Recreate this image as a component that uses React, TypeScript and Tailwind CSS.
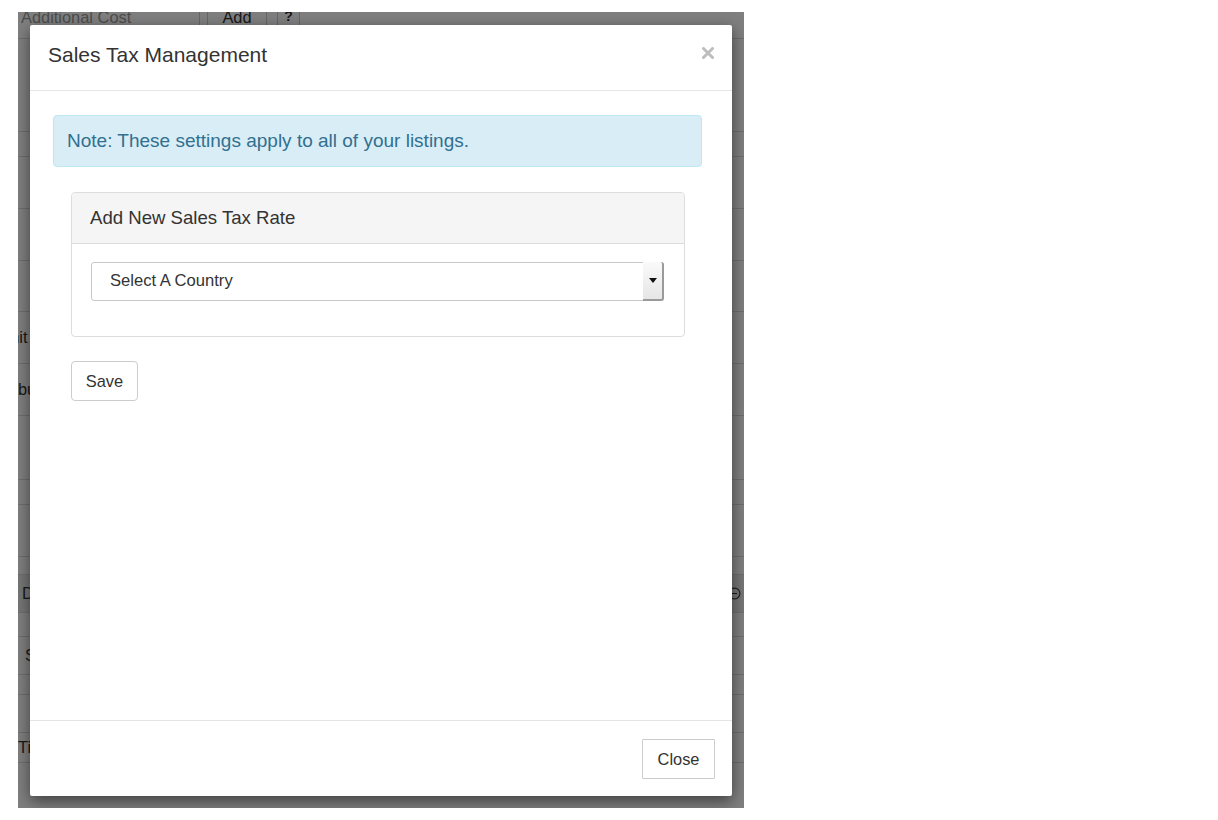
import { CircleMinus } from "lucide-react";

type Row = {
  h: string;
  left?: string;
  leftClass?: string;
  shade?: boolean;
  icon?: boolean;
};

// page rows behind the dialog, only the edges show
const rows: Row[] = [
  { h: "h-[93px]" },
  { h: "h-[25px]" },
  { h: "h-[52px]" },
  { h: "h-[52px]" },
  { h: "h-[51px]" },
  { h: "h-[52px]", left: "Limit", leftClass: "w-[9.5px] justify-end" },
  { h: "h-[52px]", left: "buyer", leftClass: "pl-[0px]" },
  { h: "h-[64px]" },
  { h: "h-[25px]" },
  { h: "h-[52px]" },
  { h: "h-[18px]" },
  { h: "h-[38px]", left: "Date", leftClass: "pl-[4px]", shade: true, icon: true },
  { h: "h-[24px]" },
  { h: "h-[38px]", left: "Shipping", leftClass: "pl-[7px]" },
  { h: "h-[20px]" },
  { h: "h-[38px]" },
  { h: "h-[30px]", left: "Time", leftClass: "pl-[0px]" },
];

const PageBehind = () => {
  return (
    <div className="flex flex-col bg-white text-[#333] text-[16.4px]">
      <div className="flex h-[27px] border-b border-[#ddd]">
        <div className="w-[182px] border-r border-[#ccc] pl-[3px]">
          <span className="block leading-none mt-[-3px] text-[#999]">
            Additional Cost
          </span>
        </div>
        <div className="ml-[7px] w-[60px] border-x border-[#ccc] flex justify-center">
          <span className="block leading-none mt-[-3px]">Add</span>
        </div>
        <div className="ml-[10px] w-[23px] border-x border-[#ccc] flex justify-center">
          <span className="block leading-none mt-[-3px] font-bold text-[14px]">
            ?
          </span>
        </div>
      </div>
      {rows.map((row, i) => (
        <div
          key={i}
          className={`${row.h} flex items-center justify-between border-b border-[#ddd] ${
            row.shade ? "bg-[#ececec]" : ""
          }`}
        >
          <div className={`flex whitespace-nowrap ${row.leftClass ?? ""}`}>
            {row.left && <span>{row.left}</span>}
          </div>
          {row.icon && (
            <CircleMinus className="size-[13px] mr-[3px] text-[#333]" strokeWidth={2} />
          )}
        </div>
      ))}
    </div>
  );
};

const SalesTaxModal = () => {
  return (
    <div className="absolute left-[12px] top-[13px] w-[702px] h-[771px] bg-white rounded-[2px] shadow-[0_5px_15px_rgba(0,0,0,0.5)] flex flex-col text-[#333]">
      <div className="h-[66px] shrink-0 border-b border-[#e5e5e5] flex items-center justify-between pl-[18px] pr-[18px]">
        <h4 className="text-[21px] font-normal mb-[5px]">Sales Tax Management</h4>
        <svg
          width="12"
          height="12"
          viewBox="0 0 12 12"
          className="mb-[10px]"
          aria-label="Close"
        >
          <path
            d="M1.5 1.5 L10.5 10.5 M10.5 1.5 L1.5 10.5"
            stroke="#bdbdbd"
            strokeWidth="3"
            strokeLinecap="round"
          />
        </svg>
      </div>

      <div className="flex-1 pt-[24px] pl-[23px] pr-[30px]">
        <div className="h-[52px] border border-[#bce8f1] bg-[#d9edf7] rounded-[4px] flex items-center pl-[13px] text-[#31708f] text-[19px]">
          Note: These settings apply to all of your listings.
        </div>

        <div className="pl-[18px] pr-[17px]">
          <div className="mt-[25px] border border-[#ddd] rounded-[4px] overflow-hidden">
            <div className="h-[51px] bg-[#f5f5f5] border-b border-[#ddd] flex items-center pl-[18px] text-[18.6px]">
              Add New Sales Tax Rate
            </div>
            <div className="pt-[18px] pb-[35px] pl-[19px] pr-[20px]">
              <div className="h-[39px] border border-[#c8c8c8] rounded-[3px] flex items-stretch justify-between bg-white">
                <span className="flex items-center pl-[18px] text-[16.6px]">
                  Select A Country
                </span>
                <span className="w-[21px] -my-px -mr-px bg-gradient-to-b from-[#fafafa] to-[#e6e6e6] border-r-2 border-b-2 border-[#9a9a9a] rounded-r-[3px] flex items-center justify-center">
                  <svg width="8" height="5" viewBox="0 0 8 5">
                    <path d="M0 0 H8 L4 5 Z" fill="#111" />
                  </svg>
                </span>
              </div>
            </div>
          </div>

          <button className="mt-[24px] w-[67px] h-[40px] border border-[#ccc] rounded-[4px] bg-white text-[16.4px] text-[#333]">
            Save
          </button>
        </div>
      </div>

      <div className="h-[76px] shrink-0 border-t border-[#e5e5e5] flex justify-end items-start pt-[18px] pr-[17px]">
        <button className="w-[73px] h-[40px] border border-[#ccc] rounded-[1px] bg-white text-[16.4px] text-[#333]">
          Close
        </button>
      </div>
    </div>
  );
};

export default function App() {
  return (
    <div
      className="w-[1218px] h-[820px] bg-white pt-[12px] pl-[18px]"
      style={{ fontFamily: '"Liberation Sans", Arial, sans-serif' }}
    >
      <div className="relative w-[726px] h-[796px] overflow-hidden">
        <PageBehind />
        <div className="absolute inset-0 bg-black/50" />
        <SalesTaxModal />
      </div>
    </div>
  );
}
